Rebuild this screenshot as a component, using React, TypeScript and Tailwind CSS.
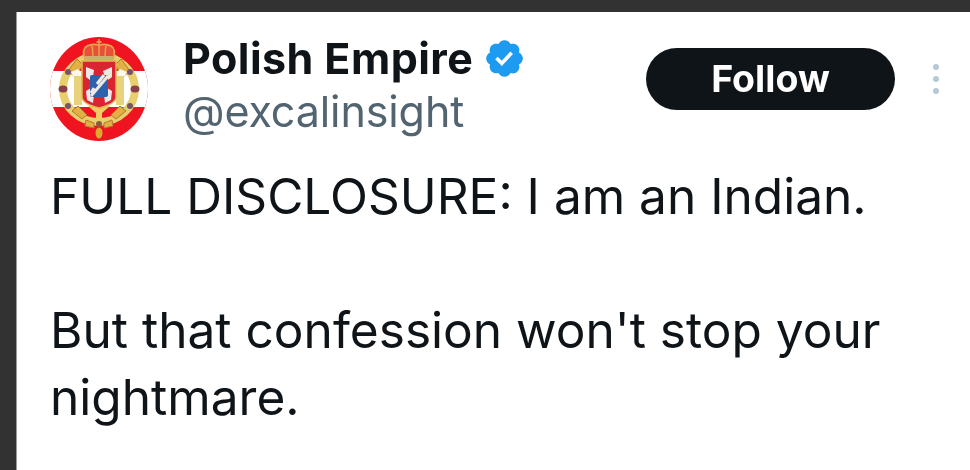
function Crest() {
  return (
    <svg viewBox="0 0 98 104" className="w-[98px] h-[104px] shrink-0 blur-[0.6px]">
      <defs>
        <clipPath id="disc">
          <ellipse cx="49" cy="52" rx="49" ry="52" />
        </clipPath>
      </defs>
      <g clipPath="url(#disc)">
        <rect width="98" height="104" fill="#f01420" />
        <rect y="34" width="98" height="36" fill="#ffffff" />
      </g>
      {/* collar */}
      <ellipse cx="49" cy="52" rx="36" ry="33" fill="none" stroke="#e6cf6c" strokeWidth="8" />
      <path d="M18 34l9-12 6 6-8 12zM80 34l-9-12-6 6 8 12z" fill="#e2b044" stroke="#b8772e" strokeWidth="1" />
      <path d="M22 74l10 8 5-4-9-9zM76 74l-10 8-5-4 9-9z" fill="#e2b044" stroke="#b8772e" strokeWidth="1" />
      <path d="M36 83l8 3v5l-9-2zM62 83l-8 3v5l9-2z" fill="#e2b044" stroke="#b8772e" strokeWidth="1" />
      <ellipse cx="13" cy="52" rx="4.5" ry="3.5" fill="#8a3f4c" />
      <ellipse cx="85" cy="52" rx="4.5" ry="3.5" fill="#8a3f4c" />
      <circle cx="18" cy="35" r="3" fill="#75556a" />
      <circle cx="80" cy="35" r="3" fill="#75556a" />
      <circle cx="18" cy="69" r="3" fill="#75556a" />
      <circle cx="80" cy="69" r="3" fill="#75556a" />
      <circle cx="49" cy="87" r="3" fill="#8a5a40" />
      {/* pillars */}
      <path d="M24 36h8v32h-8zM66 36h8v32h-8z" fill="#e8d27c" />
      <path d="M21 35l7-3 4 4v3h-9zM77 35l-7-3-4 4v3h9z" fill="#fbf7ee" />
      {/* pendant */}
      <path d="M38 69h22l-8 7v7h-6v-7z" fill="#eccf62" />
      <ellipse cx="49" cy="96" rx="3.5" ry="5.5" fill="#dfa82e" />
      {/* crown, open arches so the red shows through */}
      <path d="M35 23c-2-6-2-12 2-14 4-2 8-2 12-1 4-1 8-1 12 1 4 2 4 8 2 14z" fill="#e8503a" stroke="#e9a550" strokeWidth="1.6" />
      <path d="M49 2v8M46.5 5h5" stroke="#e59a50" strokeWidth="1.8" />
      <path d="M42 9c1 5 1 9 1 14M56 9c-1 5-1 9-1 14M49 8v15" stroke="#e9a550" strokeWidth="1.4" fill="none" />
      <rect x="35" y="19" width="28" height="5" fill="#c9b268" />
      {/* shield */}
      <path d="M32 24h34v36c0 6-9 9-17 11-8-2-17-5-17-11z" fill="#d92531" stroke="#e0b84e" strokeWidth="1.5" />
      <path d="M36 30l8 3-1 7-3 3-4-3zM62 30l-9 4 2 6 3 3 4-3zM36 54l5-3 3 7-1 8-6-3zM62 54l-5-3-3 7 1 8 6-3z" fill="#f1e6e6" />
      <rect x="40" y="38" width="18" height="22" rx="2" fill="#2c62ad" />
      <path d="M58 39L41 59M54 38l-7 9M44 51l-3 5" stroke="#eee9e4" strokeWidth="3" fill="none" />
    </svg>
  );
}

function Verified() {
  return (
    <svg viewBox="0 0 22 22" className="w-[43px] h-[43px] shrink-0 -ml-[2px]">
      <path
        fill="#1d9bf0"
        d="M20.396 11c-.018-.646-.215-1.275-.57-1.816-.354-.54-.852-.972-1.438-1.246.223-.607.27-1.264.14-1.897-.131-.634-.437-1.218-.882-1.687-.47-.445-1.053-.75-1.687-.882-.633-.13-1.29-.083-1.897.14-.273-.587-.704-1.086-1.245-1.44S11.647 1.62 11 1.604c-.646.017-1.273.213-1.813.568s-.969.854-1.24 1.44c-.608-.223-1.267-.272-1.902-.14-.635.13-1.22.436-1.69.882-.445.47-.749 1.055-.878 1.688-.13.633-.08 1.29.144 1.896-.587.274-1.087.705-1.443 1.245-.356.54-.555 1.17-.574 1.817.02.647.218 1.276.574 1.817.356.54.856.972 1.443 1.245-.224.606-.274 1.263-.144 1.896.13.634.433 1.218.877 1.688.47.443 1.054.747 1.687.878.633.132 1.29.084 1.897-.136.274.586.705 1.084 1.246 1.439.54.354 1.17.551 1.816.569.647-.016 1.276-.213 1.817-.567s.972-.854 1.245-1.44c.604.239 1.266.296 1.903.164.636-.132 1.22-.447 1.68-.907.46-.46.776-1.044.908-1.681s.075-1.299-.165-1.903c.586-.274 1.084-.705 1.439-1.246.354-.54.551-1.17.569-1.816z"
      />
      <path fill="#ffffff" d="M9.662 14.85l-3.429-3.428 1.293-1.302 2.072 2.072 4.4-4.794 1.347 1.246z" />
    </svg>
  );
}

export default function App() {
  return (
    <div className="w-[970px] h-[470px] overflow-hidden bg-[#323232] pt-3 pl-4 font-['Inter',sans-serif]">
      <div className="h-full bg-white border-l border-[#9a9a9a] pl-[33px] pt-[25px]">
        {/* Header */}
        <div className="flex items-start h-[104px]">
          <Crest />
          <div className="ml-[35px] flex flex-col -mt-[2px] blur-[0.4px]">
            <div className="flex items-center h-[46px] gap-[12px]">
              <span className="text-[43px] font-bold text-[#0f1419] leading-none tracking-[0.45px]">Polish Empire</span>
              <Verified />
            </div>
            <span className="text-[43px] text-[#536471] leading-[1.2] mt-[5px] tracking-[-0.1px]">@excalinsight</span>
          </div>
          <button className="ml-auto mt-[11px] w-[249px] h-[62px] rounded-full bg-[#0f1419] text-white text-[37.5px] font-bold blur-[0.4px]">
            Follow
          </button>
          <div className="w-[75px] mt-[27px] flex flex-col items-center gap-[6px] pl-[7px] blur-[0.4px]">
            <span className="w-[6px] h-[6px] rounded-full bg-[#b5c9d4]" />
            <span className="w-[6px] h-[6px] rounded-full bg-[#b5c9d4]" />
            <span className="w-[6px] h-[6px] rounded-full bg-[#b5c9d4]" />
          </div>
        </div>
        {/* Tweet body */}
        <div className="mt-[22px] text-[49.6px] leading-[67px] text-[#0f1419] blur-[0.4px]">
          <p>FULL DISCLOSURE: I am an Indian.</p>
          <p className="mt-[67px]">But that confession won't stop your</p>
          <p>nightmare.</p>
        </div>
      </div>
    </div>
  );
}
